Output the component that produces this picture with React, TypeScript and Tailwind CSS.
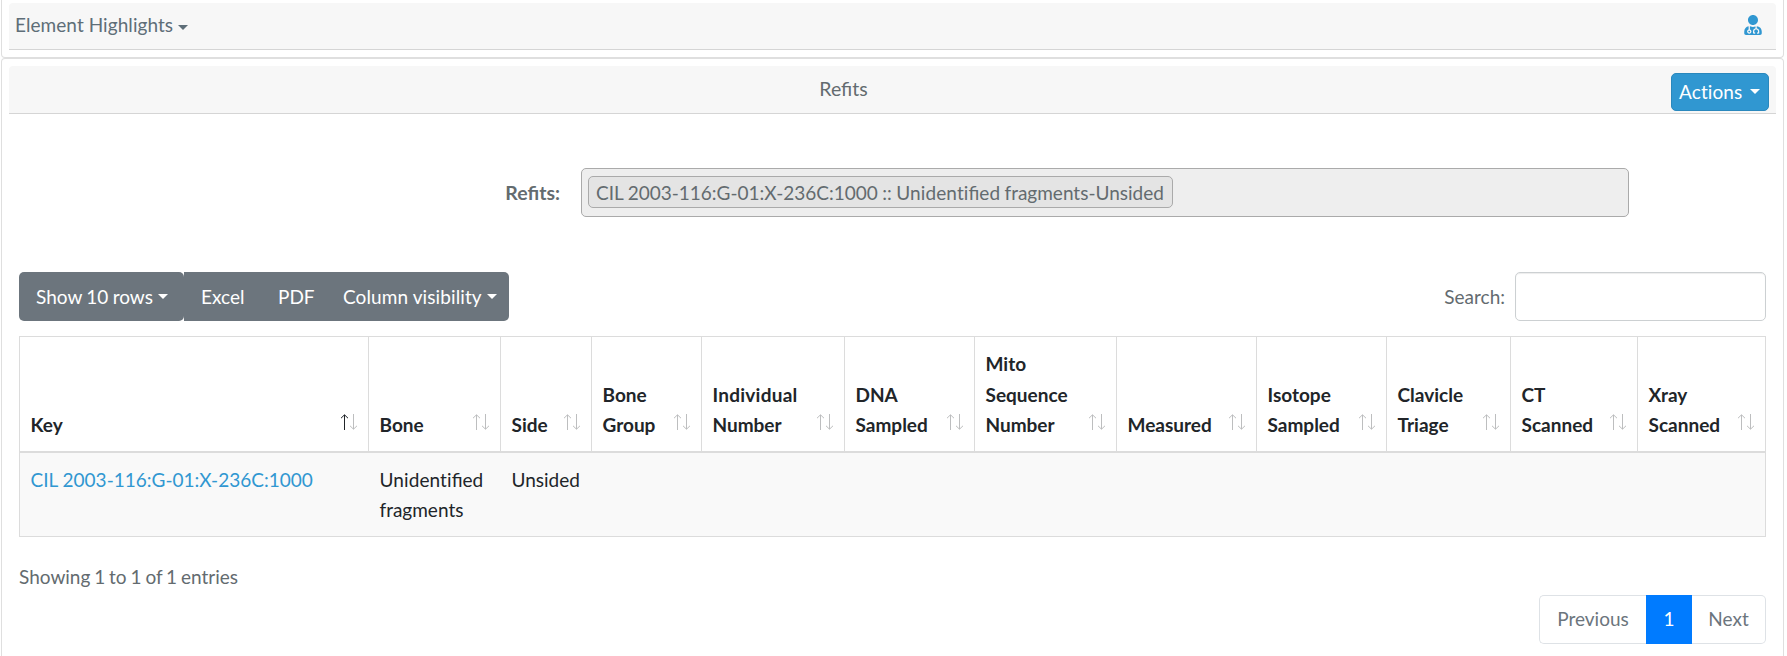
import { FaUserMd } from "react-icons/fa";

const columns: { label: string[]; width: string }[] = [
  { label: ["Key"], width: "w-[349px]" },
  { label: ["Bone"], width: "w-[132px]" },
  { label: ["Side"], width: "w-[91px]" },
  { label: ["Bone", "Group"], width: "w-[110px]" },
  { label: ["Individual", "Number"], width: "w-[143px]" },
  { label: ["DNA", "Sampled"], width: "w-[130px]" },
  { label: ["Mito", "Sequence", "Number"], width: "w-[142px]" },
  { label: ["Measured"], width: "w-[140px]" },
  { label: ["Isotope", "Sampled"], width: "w-[130px]" },
  { label: ["Clavicle", "Triage"], width: "w-[124px]" },
  { label: ["CT", "Scanned"], width: "w-[127px]" },
  { label: ["Xray", "Scanned"], width: "w-[128px]" },
];

function Caret({ className }: { className: string }) {
  return (
    <span
      className={`inline-block border-x-[5px] border-t-[5px] border-x-transparent border-t-current ${className}`}
    />
  );
}

function SortArrows({ active }: { active: boolean }) {
  return (
    <svg width="18" height="16" viewBox="0 0 18 16" fill="none" className="mb-[11px] shrink-0">
      <path d="M4.5 1V16M1 4.2L4.5 0.8L8 4.2" stroke={active ? "#212529" : "#bdbebf"} />
      <path d="M13.5 0V15M10 11.8L13.5 15.2L17 11.8" stroke="#bdbebf" />
    </svg>
  );
}

/* Keeps the "fi" ligature while leaving "ti" as two separate letters. */
function Unidentified() {
  return (
    <>
      <span className="tracking-[0.1px] [font-variant-ligatures:none]">Unidenti</span>fied
    </>
  );
}

export default function App() {
  return (
    <div className="flex h-[656px] flex-col overflow-hidden bg-white pl-px pr-[3px] font-[Lato,sans-serif] text-[19px] leading-[30.4px] text-[#636b6f]">
      <section className="h-[58px] shrink-0 rounded-b border border-t-0 border-[#dfdfdf] px-[7px] pt-[3px]">
        <header className="flex h-[47px] items-center justify-between rounded-t border-b border-[#d5d5d5] bg-[#f7f7f7] pb-[3px] pl-[6px] pr-[13px]">
          <button className="mt-[2px] tracking-[0.06px] text-[#5e6e78]">
            Element Highlights
            <Caret className="ml-[5px] align-[2px]" />
          </button>
          <FaUserMd className="size-[20px] text-[#3097d1]" />
        </header>
      </section>

      <section className="flex-1 rounded-t border border-b-0 border-[#dfdfdf] px-[7px] pt-[7px]">
        <header className="flex h-[48px] rounded-t border-b border-[#d5d5d5] bg-[#f7f7f7] pr-[7px]">
          <span className="flex-1 pl-[7px] pt-2 text-center text-[19.5px]">Refits</span>
          <button className="mt-[7px] h-[38px] w-[98px] rounded-[5px] border border-[#2a88bd] bg-[#3097d1] text-left text-white">
            <span className="pl-[7px] tracking-[0.1px] [font-variant-ligatures:none]">Actions</span>
            <Caret className="ml-[8px] align-[5px]" />
          </button>
        </header>

        <div className="mt-[54px] flex h-[49px]">
          <label className="w-[551px] pt-[10px] text-right text-[19.5px] font-bold">Refits:</label>
          <div className="ml-[21px] h-[49px] w-[1048px] rounded-[5px] border border-[#aaa] bg-[#eee] pl-[6px] pt-[7px]">
            <span className="block h-[32px] w-[585px] whitespace-nowrap rounded-[5px] border border-[#aaa] bg-[#e4e4e4] px-[7px] pt-px [word-spacing:-0.4px]">
              CIL 2003-116:G-01:X-236C:1000 :: <Unidentified /> fragments-Unsided
            </span>
          </div>
        </div>

        <div className="ml-[10px] mr-[10px] mt-[55px] flex h-[49px] justify-between">
          <div className="flex text-white">
            <button className="w-[165px] rounded-[5px] bg-[#6c757d] pl-[17px] pt-[2px] text-left [word-spacing:-0.5px]">
              Show 10 rows
              <Caret className="ml-[5px] align-[5px]" />
            </button>
            <div className="flex w-[325px] rounded-r-[5px] bg-[#6c757d]">
              <button className="w-[77px] pl-[17px] pt-[2px] text-left">Excel</button>
              <button className="w-[65px] pl-[17px] pt-[2px] text-left">PDF</button>
              <button className="pl-[17px] pt-[2px] text-left tracking-[0.1px]">
                Column visibility
                <Caret className="ml-[5px] align-[5px]" />
              </button>
            </div>
          </div>
          <label className="flex items-center gap-[10px]">
            <span className="pt-[2px]">Search:</span>
            <input className="h-[49px] w-[251px] rounded-[5px] border border-[#ccd0d2] bg-white shadow-[inset_0_1px_1px_rgba(0,0,0,0.075)]" />
          </label>
        </div>

        <table className="ml-[10px] mt-[15px] w-[1747px] table-fixed border-collapse border border-[#dcdcdc] text-[#212529]">
          <colgroup>
            {columns.map((c, i) => (
              <col key={i} className={c.width} />
            ))}
          </colgroup>
          <thead>
            <tr className="h-[115px]">
              {columns.map((c, i) => (
                <th
                  key={i}
                  className="border border-b-2 border-[#dcdcdc] pb-[10px] pl-[10.5px] pr-[10px] text-left align-bottom font-bold"
                >
                  <div className="flex items-end justify-between">
                    <span>
                      {c.label.map((line) => (
                        <span key={line} className={line === "Individual" ? "block tracking-[0.25px]" : "block"}>
                          {line}
                        </span>
                      ))}
                    </span>
                    <SortArrows active={i === 0} />
                  </div>
                </th>
              ))}
            </tr>
          </thead>
          <tbody>
            <tr className="h-[85px] bg-[#f9f9f9] align-top">
              <td className="pl-[10.5px] pt-[12px]">
                <a className="text-[#3097d1]">CIL 2003-116:G-01:X-236C:1000</a>
              </td>
              <td className="pl-[11px] pt-[12px]">
                <Unidentified /> fragments
              </td>
              <td className="pl-[11px] pt-[12px]">Unsided</td>
              <td colSpan={9} />
            </tr>
          </tbody>
        </table>

        <div className="ml-[10px] mr-[10px] mt-[25px] leading-[30px] [word-spacing:-1px]">
          Showing 1 to 1 of 1 entries
        </div>
        <nav className="mr-[10px] mt-[3px] flex h-[49px] justify-end text-[#6c757d]">
          <button className="w-[107px] rounded-l-[5px] border border-r-0 border-[#dee2e6]">Previous</button>
          <button className="w-[46px] bg-[#007bff] text-white">1</button>
          <button className="w-[74px] rounded-r-[5px] border border-l-0 border-[#dee2e6]">Next</button>
        </nav>
      </section>
    </div>
  );
}
